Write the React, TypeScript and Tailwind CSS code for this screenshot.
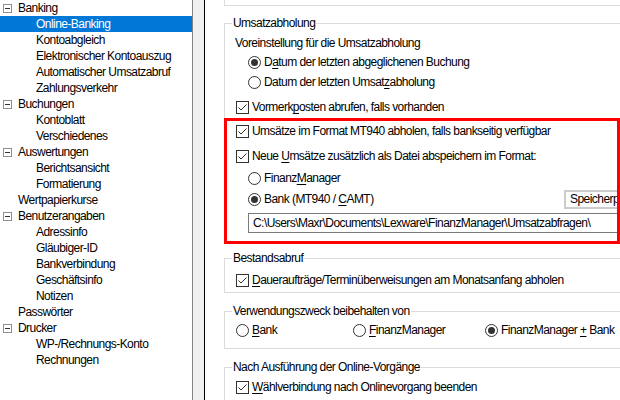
import type { ReactNode } from "react";

type TreeItem = { label: string; level: 0 | 1; expander?: boolean; selected?: boolean };

const TREE: TreeItem[] = [
  { label: "Banking", level: 0, expander: true },
  { label: "Online-Banking", level: 1, selected: true },
  { label: "Kontoabgleich", level: 1 },
  { label: "Elektronischer Kontoauszug", level: 1 },
  { label: "Automatischer Umsatzabruf", level: 1 },
  { label: "Zahlungsverkehr", level: 1 },
  { label: "Buchungen", level: 0, expander: true },
  { label: "Kontoblatt", level: 1 },
  { label: "Verschiedenes", level: 1 },
  { label: "Auswertungen", level: 0, expander: true },
  { label: "Berichtsansicht", level: 1 },
  { label: "Formatierung", level: 1 },
  { label: "Wertpapierkurse", level: 0 },
  { label: "Benutzerangaben", level: 0, expander: true },
  { label: "Adressinfo", level: 1 },
  { label: "Gläubiger-ID", level: 1 },
  { label: "Bankverbindung", level: 1 },
  { label: "Geschäftsinfo", level: 1 },
  { label: "Notizen", level: 1 },
  { label: "Passwörter", level: 0 },
  { label: "Drucker", level: 0, expander: true },
  { label: "WP-/Rechnungs-Konto", level: 1 },
  { label: "Rechnungen", level: 1 },
];

function U({ children }: { children: ReactNode }) {
  return <span className="underline decoration-1 underline-offset-2">{children}</span>;
}

function CheckBox() {
  return (
    <span className="flex h-[13px] w-[13px] shrink-0 items-center justify-center border border-[#333333] bg-white">
      <svg width="11" height="11" viewBox="0 0 11 11">
        <path d="M1.5 5.5 L4 8 L9.5 2.5" fill="none" stroke="#333333" strokeWidth="1" />
      </svg>
    </span>
  );
}

function Radio({ checked }: { checked?: boolean }) {
  return (
    <svg width="13" height="13" viewBox="0 0 13 13" className="shrink-0">
      <circle cx="6.5" cy="6.5" r="6" fill="white" stroke="#333333" />
      {checked && <circle cx="6.5" cy="6.5" r="3.5" fill="#333333" />}
    </svg>
  );
}

function Option({ control, children, className = "" }: { control: ReactNode; children: ReactNode; className?: string }) {
  return (
    <div className={"flex h-[16px] shrink-0 items-center gap-[3px] whitespace-nowrap " + className}>
      {control}
      <span className="leading-[16px]">{children}</span>
    </div>
  );
}

function Group({ title, className = "", children }: { title: string; className?: string; children: ReactNode }) {
  return (
    <div className={"relative ml-[19px] w-[420px] shrink-0 border border-[#dcdcdc] " + className}>
      <span className="absolute -top-[9px] left-[7px] bg-white px-[1px] leading-[16px]">{title}</span>
      {children}
    </div>
  );
}

function Tree() {
  return (
    <div className="w-[192px] shrink-0 bg-white">
      {TREE.map((item) => (
        <div
          key={item.label}
          className={
            "relative flex h-[16px] items-center whitespace-nowrap leading-[16px] " +
            (item.selected ? "bg-[#0078d7] text-white" : "")
          }
        >
          {item.expander && (
            <span className="absolute left-[3px] top-[4px] flex h-[9px] w-[9px] items-center justify-center border border-[#919191] bg-white">
              <span className="h-px w-[5px] bg-[#333333]" />
            </span>
          )}
          <span className={item.level === 0 ? "pl-[18px]" : "pl-[36px]"}>{item.label}</span>
        </div>
      ))}
    </div>
  );
}

export default function App() {
  return (
    <div className="flex h-[400px] w-[620px] overflow-hidden bg-white font-['Liberation_Sans',Arial,sans-serif] text-[12px] tracking-[-0.55px] text-black">
      <Tree />
      <div className="w-[13px] shrink-0 border-l border-r border-l-[#838383] border-r-black bg-[#f0f0f0]" />

      <div className="flex min-w-0 flex-1 flex-col overflow-hidden bg-white">
        <div className="ml-[19px] h-[6px] w-[420px] shrink-0 border-b border-l border-[#dcdcdc]" />

        <Group title="Umsatzabholung" className="mt-[17px]">
          <div className="ml-[10px] mt-[11px] h-[16px] leading-[16px]">Voreinstellung für die Umsatzabholung</div>
          <Option control={<Radio checked />} className="ml-[23px] mt-[3px]">
            D<U>a</U>tum der letzten abgeglichenen Buchung
          </Option>
          <Option control={<Radio />} className="ml-[23px] mt-[4px]">
            Datum der letzten Umsat<U>z</U>abholung
          </Option>
          <Option control={<CheckBox />} className="ml-[11px] mt-[9px]">
            Vormerk<U>p</U>osten abrufen, falls vorhanden
          </Option>

          <div className="-mb-px -ml-px mt-[3px] flex w-[396px] flex-col overflow-hidden border-[3px] border-[#ff0000] pb-[8px]">
            <Option control={<CheckBox />} className="ml-[9px] mt-[2px]">
              Umsätze im Format MT940 abholen, falls bankseitig verfügbar
            </Option>
            <Option control={<CheckBox />} className="ml-[9px] mt-[9px]">
              Neue <U>U</U>msätze zusätzlich als Datei abspeichern im Format:
            </Option>
            <Option control={<Radio />} className="ml-[21px] mt-[6px]">
              Finanz<U>M</U>anager
            </Option>
            <div className="ml-[21px] mt-[3px] flex h-[20px] items-center">
              <Option control={<Radio checked />} className="w-[316px]">
                Bank (MT940 / <U>C</U>AMT)
              </Option>
              <div className="flex h-[19px] shrink-0 items-center whitespace-nowrap border-2 border-[#cccccc] bg-[#fdfdfd] pl-[4px] pr-[10px] leading-[15px]">
                Speicherpfad ändern
              </div>
            </div>
            <div className="ml-[21px] mt-[4px] h-[20px] w-[460px] min-w-[460px] shrink-0 whitespace-nowrap border-y border-l border-[#7a7a7a] bg-white pl-[4px] leading-[18px]">
              C:\Users\Maxr\Documents\Lexware\FinanzManager\Umsatzabfragen\
            </div>
          </div>
        </Group>

        <Group title="Bestandsabruf" className="mt-[14px] pb-[4px]">
          <Option control={<CheckBox />} className="ml-[11px] mt-[13px]">
            <U>D</U>aueraufträge/Terminüberweisungen am Monatsanfang abholen
          </Option>
        </Group>

        <Group title="Verwendungszweck beibehalten von" className="mt-[18px] pb-[10px]">
          <div className="ml-[11px] mt-[10px] flex">
            <Option control={<Radio />} className="w-[117px]">
              <U>B</U>ank
            </Option>
            <Option control={<Radio />} className="w-[132px]">
              <U>F</U>inanzManager
            </Option>
            <Option control={<Radio checked />}>
              FinanzManager <U>+</U> Bank
            </Option>
          </div>
        </Group>

        <Group title="Nach Ausführung der Online-Vorgänge" className="mt-[18px] pb-[20px]">
          <Option control={<CheckBox />} className="ml-[11px] mt-[11px]">
            <U>W</U>ählverbindung nach Onlinevorgang beenden
          </Option>
        </Group>
      </div>
    </div>
  );
}
